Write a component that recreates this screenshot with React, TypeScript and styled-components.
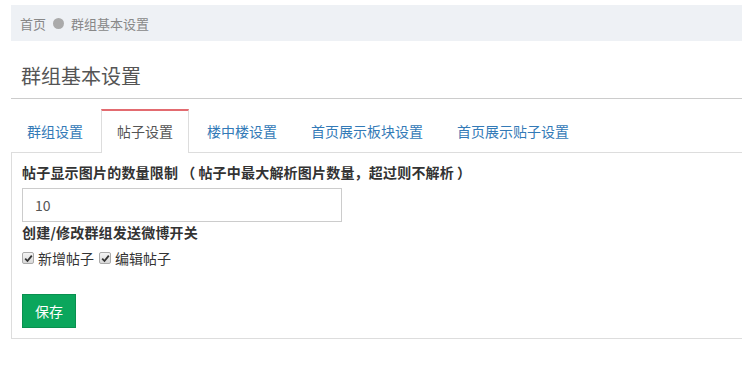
import React from "react";
import styled, { createGlobalStyle } from "styled-components";

const GlobalStyle = createGlobalStyle`
  html, body {
    margin: 0;
    padding: 0;
    background: #fff;
  }
  body {
    font-family: "Noto Sans CJK SC", "Noto Sans", "Liberation Sans", sans-serif;
    color: #333;
  }
`;

const Page = styled.div`
  margin: 5px 0 0 11px;
`;

const Breadcrumb = styled.div`
  display: flex;
  align-items: center;
  height: 36px;
  padding-left: 9px;
  background: #eef1f5;
  font-size: 13px;
  color: #888;
  gap: 7px;
`;

const Dot = styled.span`
  width: 11px;
  height: 11px;
  border-radius: 50%;
  background: #aaa;
`;

const Title = styled.h1`
  margin: 21px 0 0;
  padding: 0 0 8px 10px;
  font-size: 20px;
  line-height: 28px;
  font-weight: normal;
  color: #555;
  border-bottom: 1px solid #ccc;
`;

const TabBar = styled.ul`
  display: flex;
  list-style: none;
  margin: 10px 0 0;
  padding: 0;
  border-bottom: 1px solid #ddd;
`;

const Tab = styled.li<{ $active?: boolean }>`
  margin: 0 2px 0 0;
  padding: 0 15px;
  line-height: 41px;
  font-size: 14px;
  border: 1px solid transparent;
  border-top: 2px solid transparent;
  border-bottom: none;
  color: #337ab7;
  ${(p) =>
    p.$active &&
    `
    color: #555;
    background: #fff;
    border-color: #ddd;
    border-top-color: #e36b70;
    margin-bottom: -1px;
    padding-bottom: 1px;
  `}
`;

const Panel = styled.div`
  border-left: 1px solid #ddd;
  border-bottom: 1px solid #ddd;
  padding: 9px 10px 10px 10px;
`;

const Label = styled.div`
  font-size: 14px;
  line-height: 20px;
  font-weight: bold;
  color: #333;
  letter-spacing: 0.2px;
`;

const Paren = styled.span`
  margin: 0 3px;
`;

const Input = styled.input`
  display: block;
  box-sizing: border-box;
  width: 320px;
  height: 34px;
  margin: 6px 0 0;
  padding: 0 12px;
  border: 1px solid #ccc;
  font-family: inherit;
  font-size: 14px;
  color: #555;
  outline: none;
`;

const CheckRow = styled.div`
  display: flex;
  align-items: center;
  margin-top: 6px;
  line-height: 20px;
  font-size: 14px;
  color: #333;
`;

const CheckItem = styled.label`
  display: flex;
  align-items: center;
  gap: 4px;
  margin-right: 5px;
`;

const Box = styled.span`
  display: inline-flex;
  align-items: center;
  justify-content: center;
  box-sizing: border-box;
  width: 12px;
  height: 12px;
  border: 1px solid #aaa;
  border-radius: 2px;
  background: linear-gradient(#f4f4f4, #d8d8d8);
`;

const SaveButton = styled.button`
  display: block;
  margin-top: 26px;
  height: 34px;
  padding: 0 12px;
  border: 1px solid #09904f;
  background: #0ba65c;
  color: #fff;
  font-family: inherit;
  font-size: 14px;
  cursor: pointer;
`;

const CheckBox: React.FC<{ label: string }> = ({ label }) => (
  <CheckItem>
    <Box>
      <svg width="9" height="9" viewBox="0 0 9 9">
        <path d="M1.2 4.6 L3.5 7 L7.8 1.6" fill="none" stroke="#333" strokeWidth="1.8" />
      </svg>
    </Box>
    {label}
  </CheckItem>
);

const tabs = ["群组设置", "帖子设置", "楼中楼设置", "首页展示板块设置", "首页展示贴子设置"];

const App: React.FC = () => {
  return (
    <>
      <GlobalStyle />
      <Page>
        <Breadcrumb>
          <span>首页</span>
          <Dot />
          <span>群组基本设置</span>
        </Breadcrumb>
        <Title>群组基本设置</Title>
        <TabBar>
          {tabs.map((t, i) => (
            <Tab key={t} $active={i === 1}>
              {t}
            </Tab>
          ))}
        </TabBar>
        <Panel>
          <Label>
            帖子显示图片的数量限制<Paren>（</Paren>帖子中最大解析图片数量，超过则不解析<Paren>）</Paren>
          </Label>
          <Input defaultValue="10" />
          <Label>创建/修改群组发送微博开关</Label>
          <CheckRow>
            <CheckBox label="新增帖子" />
            <CheckBox label="编辑帖子" />
          </CheckRow>
          <SaveButton>保存</SaveButton>
        </Panel>
      </Page>
    </>
  );
};

export default App;
